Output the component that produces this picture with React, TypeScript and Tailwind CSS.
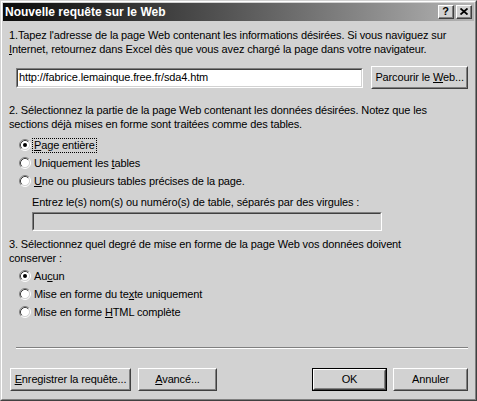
import React from "react";

function Radio({ checked }: { checked?: boolean }) {
  return (
    <svg width="12" height="12" viewBox="0 0 12 12" className="shrink-0">
      <circle cx="6" cy="6" r="4.5" fill="#fff" />
      <path d="M2.11 9.89A5.5 5.5 0 0 1 9.89 2.11" fill="none" stroke="#808080" />
      <path d="M9.89 2.11A5.5 5.5 0 0 1 2.11 9.89" fill="none" stroke="#fff" />
      <path d="M2.82 9.18A4.5 4.5 0 0 1 9.18 2.82" fill="none" stroke="#404040" />
      <path d="M9.18 2.82A4.5 4.5 0 0 1 2.82 9.18" fill="none" stroke="#d4d4d4" />
      {checked ? <circle cx="6" cy="6" r="2" fill="#000" /> : null}
    </svg>
  );
}

function RadioRow({
  checked,
  focused,
  children
}: {
  checked?: boolean;
  focused?: boolean;
  children: React.ReactNode;
}) {
  return (
    <div className="flex h-[18px] items-center gap-px">
      <Radio checked={checked} />
      <span
        className={
          focused
            ? "border border-dotted border-black px-px leading-[13px]"
            : "border border-transparent px-px leading-[13px]"
        }
      >
        {children}
      </span>
    </div>
  );
}

function Button({
  children,
  className,
  isDefault
}: {
  children: React.ReactNode;
  className?: string;
  isDefault?: boolean;
}) {
  return (
    <div className={`${isDefault ? "border border-black" : ""} ${className ?? ""}`}>
      <div className="h-full w-full border border-t-white border-l-white border-r-[#404040] border-b-[#404040]">
        <div className="flex h-full w-full items-center justify-center border border-t-[#d2d2d2] border-l-[#d2d2d2] border-r-[#808080] border-b-[#808080]">
          {children}
        </div>
      </div>
    </div>
  );
}

function Sunken({ className, white }: { className?: string; white?: boolean }) {
  return (
    <div className={`border border-t-[#808080] border-l-[#808080] border-r-white border-b-white ${className ?? ""}`}>
      <div
        className={`h-full w-full border border-t-[#404040] border-l-[#404040] border-r-[#d2d2d2] border-b-[#d2d2d2] ${white ? "bg-white" : "bg-[#d2d2d2]"}`}
      />
    </div>
  );
}

function TitleButton({ children }: { children: React.ReactNode }) {
  return (
    <div className="h-[14px] w-[16px] border border-t-white border-l-white border-r-[#404040] border-b-[#404040] bg-[#d2d2d2]">
      <div className="flex h-full w-full items-center justify-center border-r border-b border-r-[#808080] border-b-[#808080]">
        {children}
      </div>
    </div>
  );
}

export default function App() {
  return (
    <div className="h-[401px] w-[477px] border border-t-[#d2d2d2] border-l-[#d2d2d2] border-r-[#404040] border-b-[#404040] bg-[#d2d2d2] font-['Liberation_Sans',Arial,sans-serif] text-[11px] tracking-[-0.13px] text-black">
      <div className="flex h-full flex-col border border-t-white border-l-white border-r-[#808080] border-b-[#808080] p-px">
        <div className="flex h-[18px] items-center bg-gradient-to-r from-[#0c0c0c] to-[#b4b4b4] pr-[2px] pl-[2px]">
          <span className="text-[12px] font-bold tracking-normal text-white">Nouvelle requête sur le Web</span>
          <div className="ml-auto flex gap-[2px]">
            <TitleButton>
              <span className="text-[11px] leading-none font-bold">?</span>
            </TitleButton>
            <TitleButton>
              <svg width="8" height="7" viewBox="0 0 8 7">
                <path d="M0.5 0.5L7.5 6.5M7.5 0.5L0.5 6.5" stroke="#000" strokeWidth="1.8" />
              </svg>
            </TitleButton>
          </div>
        </div>

        <div className="flex flex-1 flex-col px-[6px]">
          <p className="mt-[7px] leading-[14px]">
            1.Tapez l'adresse de la page Web contenant les informations désirées. Si vous naviguez sur{" "}
            <u>I</u>nternet, retournez dans Excel dès que vous avez chargé la page dans votre navigateur.
          </p>

          <div className="mt-[10px] flex h-[23px] items-center">
            <div className="relative ml-[7px] h-[20px] w-[348px]">
              <Sunken white className="h-full w-full" />
              <span className="absolute top-0 left-[3px] flex h-full items-center">
                http://fabrice.lemainque.free.fr/sda4.htm
              </span>
            </div>
            <Button className="ml-[8px] h-[23px] w-[97px]">
              <span>
                Parcourir le <u>W</u>eb...
              </span>
            </Button>
          </div>

          <p className="mt-[14px] leading-[14px]">
            2. Sélectionnez la partie de la page Web contenant les données désirées. Notez que les sections
            déjà mises en forme sont traitées comme des tables.
          </p>

          <div className="mt-[5px] flex flex-col pl-[10px]">
            <RadioRow checked focused>
              <u>P</u>age entière
            </RadioRow>
            <RadioRow>
              Uniquement les <u>t</u>ables
            </RadioRow>
            <RadioRow>
              <u>U</u>ne ou plusieurs tables précises de la page.
            </RadioRow>
          </div>

          <p className="mt-[5px] pl-[23px] leading-[14px]">
            Entrez le(s) nom(s) ou numéro(s) de table, séparés par des virgules :
          </p>
          <Sunken className="mt-[3px] ml-[23px] h-[19px] w-[350px]" />

          <p className="mt-[6px] leading-[14px]">
            3. Sélectionnez quel degré de mise en forme de la page Web vos données doivent
            <br />
            conserver :
          </p>

          <div className="mt-[2px] flex flex-col pl-[10px]">
            <RadioRow checked>
              Au<u>c</u>un
            </RadioRow>
            <RadioRow>
              Mise en forme du te<u>x</u>te uniquement
            </RadioRow>
            <RadioRow>
              Mise en forme <u>H</u>TML complète
            </RadioRow>
          </div>

          <div className="mt-[26px] ml-[7px] border-t border-b border-t-[#808080] border-b-white" />

          <div className="mt-[19px] flex h-[23px] items-center">
            <Button className="ml-px h-[23px] w-[121px]">
              <span>
                <u>E</u>nregistrer la requête...
              </span>
            </Button>
            <Button className="ml-[7px] h-[23px] w-[79px]">
              <span>
                <u>A</u>vancé...
              </span>
            </Button>
            <Button isDefault className="ml-auto h-[23px] w-[75px]">
              <span>OK</span>
            </Button>
            <Button className="ml-[6px] h-[23px] w-[75px]">
              <span>Annuler</span>
            </Button>
          </div>
        </div>
      </div>
    </div>
  );
}
